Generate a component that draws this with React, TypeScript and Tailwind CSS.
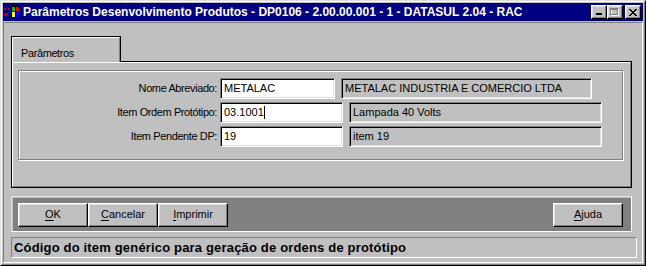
import React from "react";

// classic 3D borders
const raised =
  "border border-t-white border-l-white border-b-black border-r-black shadow-[inset_-1px_-1px_0_#808080,inset_1px_1px_0_#dfdfdf]";
const sunken =
  "border border-t-[#808080] border-l-[#808080] border-b-white border-r-white shadow-[inset_1px_1px_0_#000,inset_-1px_-1px_0_#dfdfdf]";

function TitleIcon() {
  return (
    <svg width="16" height="14" viewBox="0 0 16 14" shapeRendering="crispEdges">
      <rect x="0" y="3" width="2" height="2" fill="#c00000" />
      <rect x="2" y="2" width="2" height="2" fill="#0000c0" />
      <rect x="4" y="3" width="2" height="2" fill="#c00000" />
      <rect x="0" y="6" width="2" height="2" fill="#0000c0" />
      <rect x="2" y="8" width="2" height="2" fill="#c00000" />
      <rect x="0" y="9" width="2" height="2" fill="#c00000" />
      <rect x="4" y="9" width="2" height="2" fill="#0000c0" />
      <rect x="7" y="1" width="9" height="12" fill="#000" />
      <rect x="8" y="2" width="3" height="4" fill="#00c000" />
      <rect x="12" y="2" width="3" height="4" fill="#ff0000" />
      <rect x="8" y="7" width="3" height="5" fill="#ffff00" />
      <rect x="12" y="7" width="3" height="5" fill="#0000ff" />
    </svg>
  );
}

function CaptionButton({ kind }: { kind: "min" | "max" | "close" }) {
  return (
    <div className={`w-[16px] h-[14px] bg-[#c0c0c0] flex items-center justify-center ${raised}`}>
      {kind === "min" && (
        <svg width="8" height="8" viewBox="0 0 8 8" shapeRendering="crispEdges">
          <rect x="1" y="5" width="6" height="2" fill="#000" />
        </svg>
      )}
      {kind === "max" && (
        <svg width="10" height="9" viewBox="0 0 10 9" shapeRendering="crispEdges">
          <rect x="1.5" y="1.5" width="7" height="6" fill="none" stroke="#fff" />
          <rect x="0.5" y="0.5" width="7" height="6" fill="none" stroke="#808080" />
          <rect x="1" y="1" width="7" height="1" fill="#808080" />
        </svg>
      )}
      {kind === "close" && (
        <svg width="8" height="7" viewBox="0 0 8 7" shapeRendering="crispEdges">
          <path d="M0 0h2v1h-2zM6 0h2v1h-2zM1 1h2v1h-2zM5 1h2v1h-2zM2 2h4v1h-4zM3 3h2v1h-2zM2 4h4v1h-4zM1 5h2v1h-2zM5 5h2v1h-2zM0 6h2v1h-2zM6 6h2v1h-2z" fill="#000" />
        </svg>
      )}
    </div>
  );
}

function Field({
  label,
  value,
  inputW,
  desc,
  descW,
  caret,
}: {
  label: string;
  value: string;
  inputW: string;
  desc: string;
  descW: string;
  caret?: boolean;
}) {
  return (
    <div className="flex items-center h-[21px]">
      <div className="w-[200px] text-right pr-[2px] tracking-[-0.4px]">{label}</div>
      <div className={`${inputW} h-[21px] bg-white ml-px pl-[3px] flex items-center ${sunken}`}>
        <span>{value}</span>
        {caret && <span className="w-px h-[13px] bg-black" />}
      </div>
      <div className={`${descW} h-[21px] bg-[#c0c0c0] ml-[6px] pl-[3px] flex items-center ${sunken}`}>
        {desc}
      </div>
    </div>
  );
}

function Btn({ k, rest, className = "" }: { k: string; rest: string; className?: string }) {
  return (
    <div className={`w-[70px] h-[24px] bg-[#c0c0c0] flex items-center justify-center ${raised} ${className}`}>
      <span>
        <span className="underline underline-offset-2">{k}</span>
        {rest}
      </span>
    </div>
  );
}

export default function App() {
  return (
    <div className="w-[646px] h-[266px] bg-[#c0c0c0] border border-t-[#dfdfdf] border-l-[#dfdfdf] border-b-black border-r-black font-['Liberation_Sans',Arial,sans-serif] text-[11px] text-black leading-none">
      <div className="h-full border border-t-white border-l-white border-b-[#808080] border-r-[#808080] p-px flex flex-col">
        {/* title bar */}
        <div className="h-[18px] bg-[#000080] flex items-center pl-[1px] pr-[2px] shrink-0">
          <TitleIcon />
          <span className="ml-[3px] text-white font-bold text-[12px] whitespace-nowrap">
            Parâmetros Desenvolvimento Produtos - DP0106 - 2.00.00.001 - 1 - DATASUL 2.04 - RAC
          </span>
          <div className="ml-auto flex items-center">
            <CaptionButton kind="min" />
            <CaptionButton kind="max" />
            <div className="w-[2px]" />
            <CaptionButton kind="close" />
          </div>
        </div>

        {/* client area */}
        <div className="mt-px flex-1 border border-t-[#808080] border-l-[#808080] border-b-white border-r-white pl-[7px] pt-[13px] flex flex-col">
          {/* tab header */}
          <div className="relative z-10 -mb-px w-[110px] h-[26px] bg-[#c0c0c0] border-t border-l border-r border-black">
            <div className="h-full border-t border-l border-t-white border-l-white border-r border-r-[#808080] pl-[8px] pt-[10px] tracking-[-0.4px]">
              Parâmetros
            </div>
          </div>

          {/* tab panel */}
          <div className="w-[621px] h-[127px] border border-black">
            <div className="h-full border border-t-white border-l-white border-b-[#808080] border-r-[#808080] pl-[5px] pt-[7px]">
              <div className="w-[605px] h-[90px] border border-[#808080] shadow-[inset_1px_1px_0_#fff,1px_1px_0_#fff] pt-[7px] flex flex-col gap-[3px]">
                <Field label="Nome Abreviado:" value="METALAC" inputW="w-[115px]" desc="METALAC INDUSTRIA E COMERCIO LTDA" descW="w-[251px]" />
                <Field label="Item Ordem Protótipo:" value="03.1001" inputW="w-[123px]" desc="Lampada 40 Volts" descW="w-[253px]" caret />
                <Field label="Item Pendente DP:" value="19" inputW="w-[123px]" desc="item 19" descW="w-[253px]" />
              </div>
            </div>
          </div>

          {/* button bar */}
          <div className="mt-[8px] w-[621px] h-[36px] border border-t-[#dfdfdf] border-l-[#dfdfdf] border-b-white border-r-white">
            <div className="h-full bg-[#808080] border-t border-l border-[#c0c0c0] flex items-center pl-[5px] pr-[8px]">
              <Btn k="O" rest="K" />
              <Btn k="C" rest="ancelar" />
              <Btn k="I" rest="mprimir" />
              <Btn k="A" rest="juda" className="ml-auto" />
            </div>
          </div>

          {/* status bar */}
          <div className="mt-[5px] w-[626px] h-[21px] border border-t-[#808080] border-l-[#808080] border-b-white border-r-white flex items-center pl-[2px]">
            <span className="font-bold text-[13px] tracking-[0.17px] whitespace-nowrap">
              Código do item genérico para geração de ordens de protótipo
            </span>
          </div>
        </div>
      </div>
    </div>
  );
}
